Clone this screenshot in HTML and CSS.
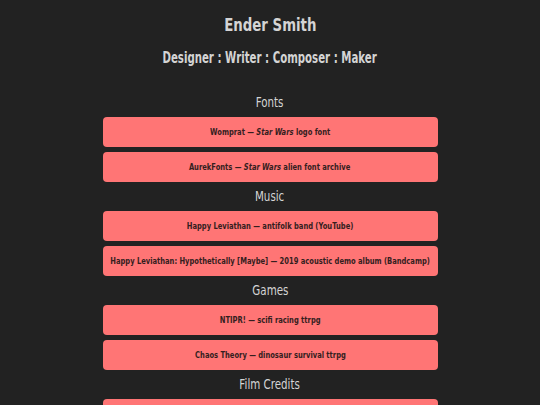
FILE: index.html
```html
<!DOCTYPE html>
<html>
<head>
<meta charset="utf-8">
<link rel="stylesheet" href="styles.css">
</head>
<body>
<main class="page">
  <header class="intro">
    <h1 class="name"><span class="narrow">Ender Smith</span></h1>
    <h2 class="tagline"><span class="narrow">Designer : Writer : Composer : Maker</span></h2>
  </header>
  <section class="group">
    <h3 class="group-title"><span class="narrow">Fonts</span></h3>
    <a class="link" href="#"><span class="narrow">Womprat — <em>Star Wars</em> logo font</span></a>
    <a class="link" href="#"><span class="narrow">AurekFonts — <em>Star Wars</em> alien font archive</span></a>
  </section>
  <section class="group">
    <h3 class="group-title"><span class="narrow">Music</span></h3>
    <a class="link" href="#"><span class="narrow">Happy Leviathan — antifolk band (YouTube)</span></a>
    <a class="link" href="#"><span class="narrow">Happy Leviathan: Hypothetically [Maybe] — 2019 acoustic demo album (Bandcamp)</span></a>
  </section>
  <section class="group">
    <h3 class="group-title"><span class="narrow">Games</span></h3>
    <a class="link" href="#"><span class="narrow">NTIPR! — scifi racing ttrpg</span></a>
    <a class="link" href="#"><span class="narrow">Chaos Theory — dinosaur survival ttrpg</span></a>
  </section>
  <section class="group">
    <h3 class="group-title"><span class="narrow">Film Credits</span></h3>
    <a class="link" href="#"><span class="narrow">Film credits</span></a>
  </section>
</main>
</body>
</html>
```
FILE: styles.css
```css
html, body {
  margin: 0;
  padding: 0;
  background: #222222;
}
body {
  font-family: "DejaVu Sans", "Liberation Sans", sans-serif;
  color: #d4d4d4;
}
.page {
  width: 335px;
  margin: 0 auto;
  padding-top: 12px;
}
.narrow {
  display: inline-block;
  flex-shrink: 0;
  white-space: nowrap;
  transform-origin: center center;
}
.intro {
  text-align: center;
}
.name {
  margin: 0;
  font-size: 18px;
  line-height: 26px;
  font-weight: bold;
  display: flex;
  justify-content: center;
}
.name .narrow {
  transform: scaleX(0.74);
}
.tagline {
  margin: 7px 0 0;
  font-size: 15px;
  line-height: 26px;
  font-weight: bold;
  display: flex;
  justify-content: center;
}
.tagline .narrow {
  transform: scaleX(0.68);
}
.group {
  display: flex;
  flex-direction: column;
  gap: 5px;
}
.intro + .group {
  margin-top: 17px;
}
.group-title {
  margin: 0 0 -5px;
  font-size: 14.5px;
  font-weight: normal;
  line-height: 29px;
  display: flex;
  justify-content: center;
}
.group-title .narrow {
  transform: scaleX(0.71);
}
.link {
  display: flex;
  justify-content: center;
  align-items: center;
  height: 30px;
  background: #ff7575;
  border-radius: 4px;
  color: #341e1e;
  text-decoration: none;
  font-size: 9px;
  font-weight: bold;
}
.link .narrow {
  transform: scaleX(0.75);
}
.link em {
  font-style: italic;
}
```
